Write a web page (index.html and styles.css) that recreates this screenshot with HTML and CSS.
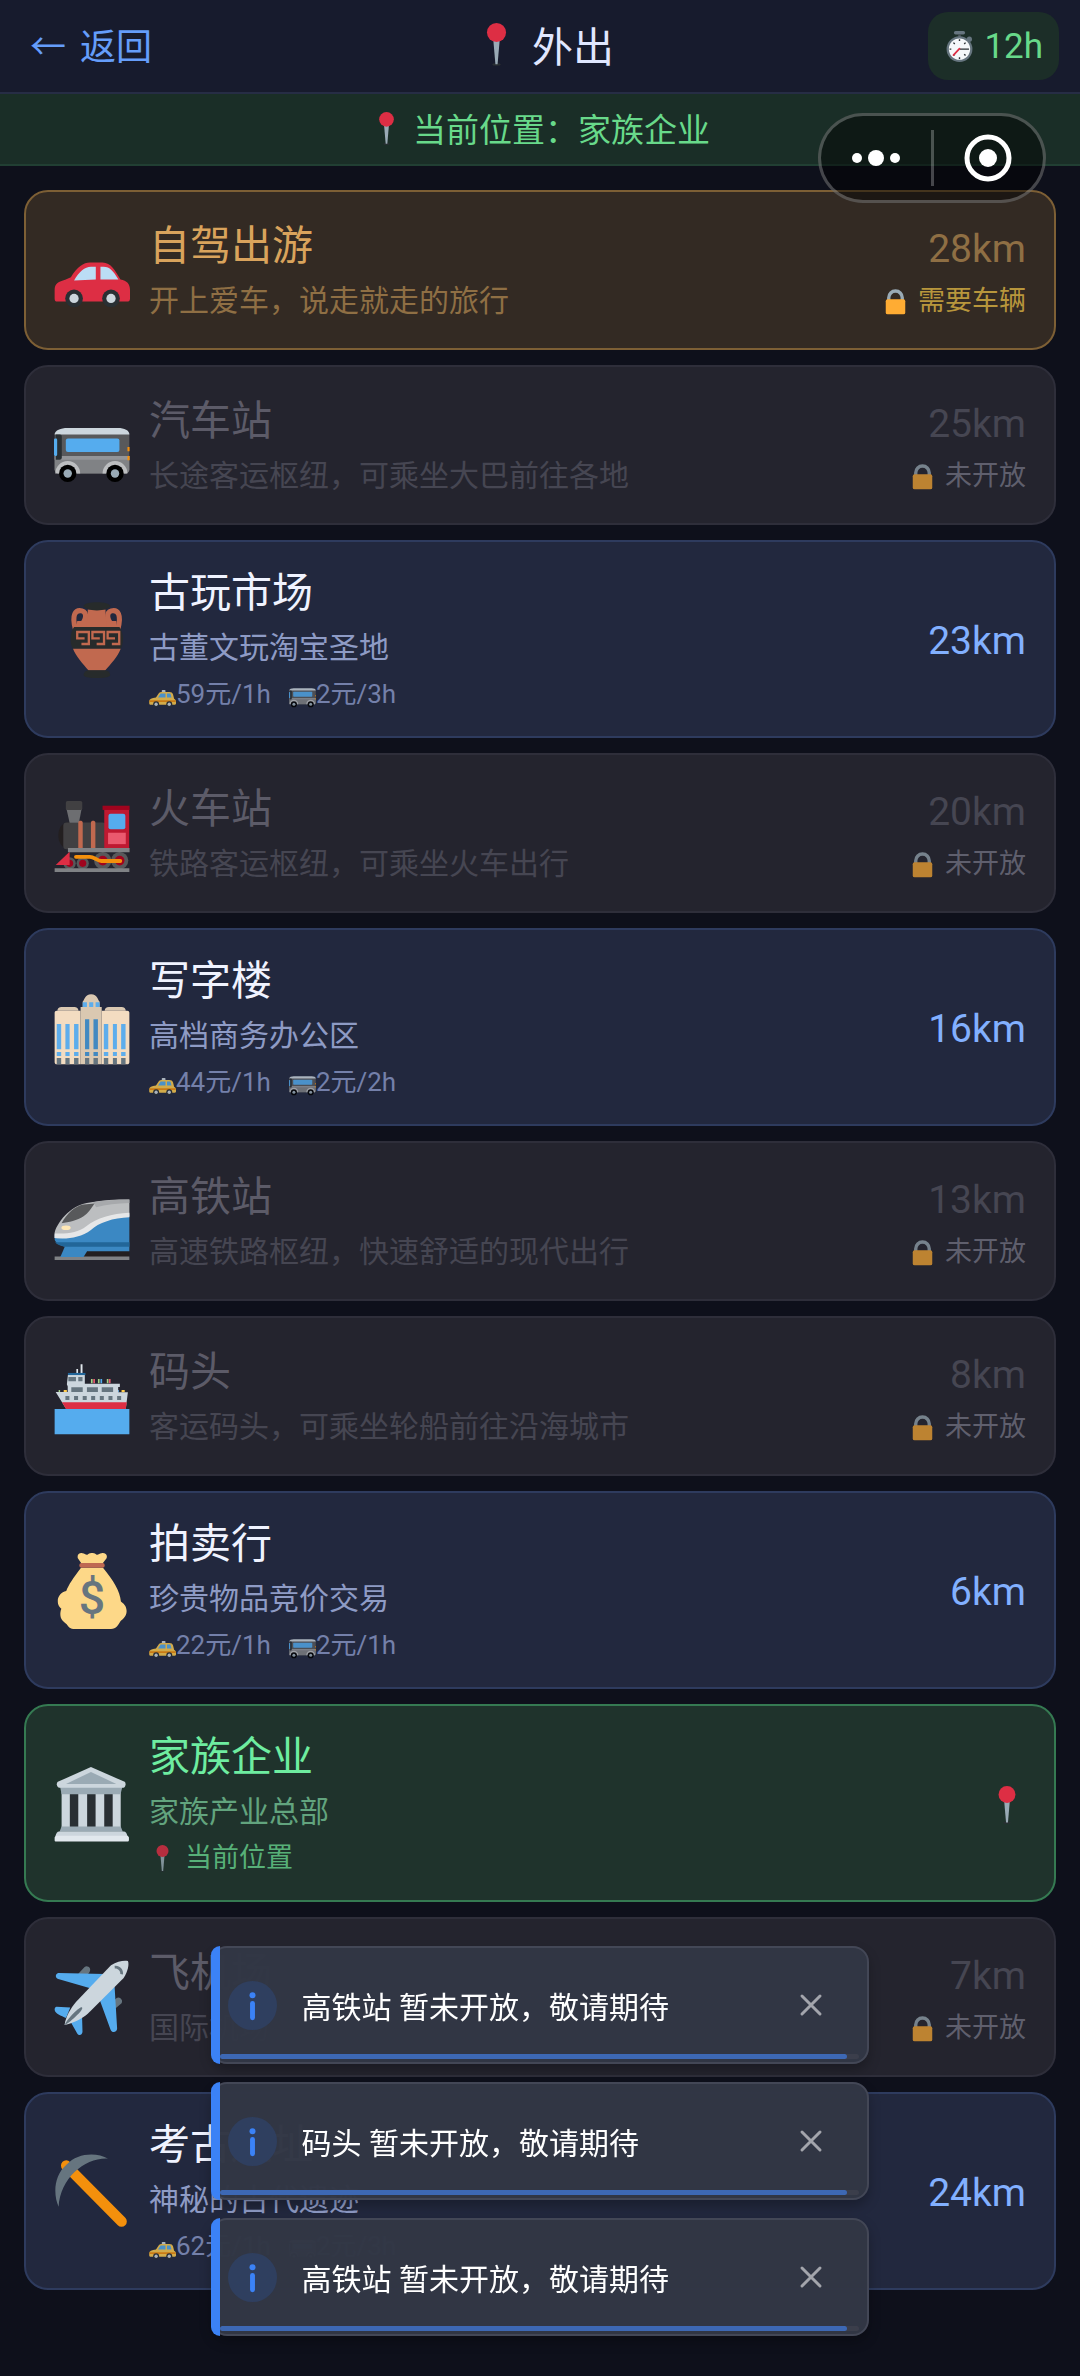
FILE: index.html
```html
<!DOCTYPE html>
<html lang="zh-CN">
  <head>
    <meta charset="UTF-8" />
    <meta name="viewport" content="width=device-width, initial-scale=1.0" />
    <title>外出</title>
    <link rel="stylesheet" href="styles.css">
  </head>
  <body>
    <!-- icon sprite -->
    <svg class="sprite" aria-hidden="true">
      <symbol id="i-pin" viewBox="0 0 36 36">
        <ellipse cx="18" cy="34.8" rx="3.500" ry="1" fill="#292f33" />
        <path d="M15.300 14h5.400l-1.800 20.500h-1.800z" fill="#99aab5" />
        <circle cx="18" cy="8" r="8" fill="#dd2e44" />
      </symbol>
      <symbol id="i-watch" viewBox="0 0 36 36">
        <rect x="11.500" y="0" width="13" height="4" rx="2" fill="#66757f" />
        <path d="M16.500 4h3v3h-3z" fill="#4b565d" />
        <circle cx="29.500" cy="9.500" r="3" fill="#66757f" />
        <circle cx="18" cy="21" r="15" fill="#66757f" />
        <circle cx="18" cy="21" r="12.400" fill="#f5f8fa" />
        <path d="M18 9.500v2M18 30.500v2M6.500 21h2M11 13.500l1.500 1.500M25 13.500l-1.500 1.500M11 28.500l1.500-1.500M25 28.500l-1.500-1.500M18 21h11" stroke="#292f33" stroke-width="1.600" />
        <path d="M18 20.500l-7 7.500" stroke="#dd2e44" stroke-width="2" stroke-linecap="round" />
      </symbol>
      <symbol id="i-lock" viewBox="0 0 36 36">
        <path d="M9 19v-6a9 9 0 0 1 18 0v6" fill="none" stroke="#99aab5" stroke-width="4.500" />
        <rect x="5" y="15" width="26" height="20" rx="2.500" fill="#ffac33" />
      </symbol>
      <symbol id="i-car" viewBox="0 0 36 36">
        <path d="M.3 31V27c0-3 2-4 5-4.800L8 21c3-5 6-7 9-7h6c4 0 6 4 8.500 8 3 .5 4.500 2 4.500 5v4c0 1-.5 1.500-1.500 1.500h-33C.7 32.500.3 32 .3 31z" fill="#dd2e44" />
        <path d="M9.500 22.500c2.500-4.200 5-6.500 8-6.500h2.300v6zM22 16h1.500c3 0 4.500 2 7 6H22z" fill="#bbddf5" />
        <circle cx="9.500" cy="31" r="4.200" fill="#292f33" /><circle cx="9.500" cy="31" r="2.200" fill="#ccd6dd" />
        <circle cx="27" cy="31" r="4.200" fill="#292f33" /><circle cx="27" cy="31" r="2.200" fill="#ccd6dd" />
      </symbol>
      <symbol id="i-taxi" viewBox="0 0 36 36">
        <rect x="17" y="12" width="5" height="3" rx="1" fill="#ccd6dd" />
        <path d="M.3 30v-3c0-3 3-4.500 9-5l4-6c.8-1 2-1.500 3.500-1.500H27c3 0 4 1 5 3l1.500 6C35 24 36 26 36 28v2c0 1-.5 1.500-1.500 1.500h-33C.7 31.500.3 31 .3 30z" fill="#ffcc4d" />
        <path d="M12 22l3.500-5.200H22V22zM24 16.800h4.500l1.500 5.200h-6z" fill="#55acee" />
        <path d="M1 25.500h34.500v2.500H.3z" fill="#f4900c" />
        <circle cx="9.500" cy="31" r="4" fill="#292f33" /><circle cx="9.500" cy="31" r="2.200" fill="#ccd6dd" />
        <circle cx="27" cy="31" r="4" fill="#292f33" /><circle cx="27" cy="31" r="2.200" fill="#ccd6dd" />
      </symbol>
      <symbol id="i-bus" viewBox="0 0 36 36">
        <path d="M.3 12h35.400v17c0 1.200-.8 2-2 2H2.300c-1.200 0-2-.8-2-2z" fill="#58595b" />
        <path d="M.3 22.700h35.400V29c0 1.200-.8 2-2 2H2.300c-1.200 0-2-.8-2-2z" fill="#808285" />
        <path d="M.3 22.700h35.400v1.800H.3z" fill="#939598" />
        <path d="M.3 12.600c0-2 3-3.100 6-3.100h24c3 0 5.400 1.100 5.400 3.100z" fill="#ccd6dd" />
        <path d="M.8 12.600h2c.6 0 .9.400.9 1v9.700c0 .8-.4 1.200-1 1.200H.8z" fill="#292f33" />
        <rect x="0" y="14.500" width="1.500" height="8.200" rx=".5" fill="#55acee" />
        <rect x="5.600" y="14.400" width="25.400" height="6.500" rx="1" fill="#55acee" />
        <path d="M34.800 18.500h1v2h-1zM34.800 22.700h1v2h-1z" fill="#f4900c" />
        <path d="M.6 31a5.900 5.900 0 0 1 11.800 0zM23 31a5.900 5.900 0 0 1 11.800 0z" fill="#bcbec0" />
        <circle cx="6.500" cy="31" r="4.100" /><circle cx="6.500" cy="31" r="2" fill="#99aab5" />
        <circle cx="28.900" cy="31" r="4.100" /><circle cx="28.900" cy="31" r="2" fill="#99aab5" />
      </symbol>
      <symbol id="i-vase" viewBox="0 0 36 36">
        <path d="M16 3.500h8.400v3l2.500 5.500H13.500L16 6.500z" fill="#c1694f" />
        <path d="M10.200 13c-2-7 0-9.500 3-8.800 2.600.8 2.600 4.800-2 8.300M30.200 13c2-7 0-9.500-3-8.800-2.600.8-2.600 4.800 2 8.300" fill="none" stroke="#c1694f" stroke-width="2.400" />
        <path d="M11 9h4.500v3.500h-5zM25 9h4.500l.5 3.500h-5z" fill="#c1694f" />
        <path d="M14 2c0-2.500 12.600-2.500 12.600 0 0 .8-3 2-6.300 2S14 2.800 14 2z" fill="#272b2b" />
        <path d="M9.500 11.800H31c2.200 3 2 8 .6 10.300H9C7.500 19.800 7.300 14.800 9.500 11.800z" fill="#272b2b" />
        <path d="M9 22.100h22.600c-1.500 4-4.600 7-7.400 10.400h-7.800C13.600 29 10.500 26 9 22.100z" fill="#c1694f" />
        <path d="M14.500 17.200H11V14.200h5.500v5.700H13M21.700 17.200h-3.500V14.200h5.500v5.700h-3.500M28.900 17.200h-3.500V14.200h5.500v5.700h-3.500" fill="none" stroke="#c1694f" stroke-width="1.100" />
        <path d="M16 32.300h8.600c1.500.5 2 1.500 2 2.300 0 2-12.600 2-12.600 0 0-.8.500-1.800 2-2.300z" fill="#272b2b" />
      </symbol>
      <symbol id="i-train" viewBox="0 0 36 36">
        <path d="M6 12.600h2v12.200H6c-5.200-1-5.200-11.200 0-12.200z" fill="#231f20" />
        <rect x="4.400" y="12.600" width="20" height="12.600" rx="1.500" fill="#414042" />
        <path d="M5.900 6h7.200l-1.300 6.700H7.400z" fill="#6d6e71" />
        <rect x="5.600" y="2.400" width="7.800" height="4.200" rx=".8" fill="#414042" />
        <path d="M11.500 12.500c0-1 2.100-1 2.100 0v12.300h-2.100zM17.500 12.500c0-1 2.100-1 2.100 0v12.300h-2.100z" fill="#c1694f" />
        <path d="M23.800 6h11.800v19H23.800z" fill="#be1931" />
        <path d="M23 4.600h12.800v2H23z" fill="#a0041e" />
        <rect x="25.800" y="8.400" width="8" height="7.400" rx="1" fill="#55acee" />
        <path d="M25.600 17.400h8.400v5.400h-8.400z" fill="#ea596e" />
        <circle cx="7.400" cy="31.900" r="2.900" fill="#58595b" /><circle cx="7.400" cy="31.900" r="1.700" fill="#a0041e" />
        <circle cx="13.600" cy="31.900" r="2.900" fill="#58595b" /><circle cx="13.600" cy="31.900" r="1.700" fill="#a0041e" />
        <circle cx="23.100" cy="30.600" r="4.100" fill="#58595b" /><circle cx="23.100" cy="30.600" r="2.300" fill="#a0041e" />
        <circle cx="31.100" cy="30.600" r="4.100" fill="#58595b" /><circle cx="31.100" cy="30.600" r="2.300" fill="#a0041e" />
        <path d="M6.600 24.600h29.200v2H6.600z" fill="#808285" />
        <path d="M.8 32.700l6.600-6.300v6.300z" fill="#dd2e44" />
        <path d="M10.400 28.800H17c2 0 3.500 2 5.500 2h8.900" fill="none" stroke="#f4900c" stroke-width="1.800" stroke-linecap="round" />
        <path d="M.3 34.200h35.400V36H.3z" fill="#808285" />
      </symbol>
      <symbol id="i-office" viewBox="0 0 36 36">
        <path d="M1.600 9.800c0-1.200.8-1.800 2-1.800h6c1.200 0 2 .6 2 1.800zM24 9.800c0-1.200.8-1.800 2-1.800h6c1.200 0 2 .6 2 1.800z" fill="#dac8b1" />
        <path d="M.3 10.800c0-.6.400-1 1-1h11.300v25.400H1.300c-.6 0-1-.4-1-1zM22.600 9.800h12.100c.6 0 1 .4 1 1v23.400c0 .6-.4 1-1 1H22.600z" fill="#f3dcc1" />
        <path d="M12.600 8h1V5.500c.8-.5 1-3.500 4-3.500s3.200 3 4 3.500V8h1v27.200h-10z" fill="#dac8b1" />
        <path d="M13.600 5.800h2V8h-2zM16.700 5.800h1.900V8h-1.900zM19.700 5.800h1.900V8h-1.900zM1.300 16.100h2.100v12H1.300zM5.400 16.100h2v12h-2zM9.500 16.100h2.100v12H9.500zM23.600 16.100h2.100v12h-2.100zM27.900 16.100h1.900v12h-1.900zM31.800 16.100h2.100v12h-2.100zM1.300 29.400h2.100v1.900H1.300zM5.400 29.400h2v1.900h-2zM9.500 29.400h2.100v1.900H9.500zM23.600 29.400h2.100v1.900h-2.100zM27.900 29.400h1.900v1.900h-1.900zM31.800 29.400h2.100v1.900h-2.100z" fill="#5dadec" />
        <path d="M14.700 13.900h2v14.200h-2zM18.700 13.900h2.100v14.200h-2.100zM14.700 29.400h2v1.900h-2zM18.700 29.400h2.100v1.900h-2.100z" fill="#4289c1" />
        <path d="M1.300 32.200h2.100v3H1.300zM5.400 32.200h2v3h-2zM9.500 32.200h2.100v3H9.500zM14.700 32.200h2v3h-2zM18.700 32.200h2.100v3h-2.100zM23.600 32.200h2.100v3h-2.100zM27.900 32.200h1.900v3h-1.900zM31.800 32.200h2.100v3h-2.100z" fill="#66757f" />
      </symbol>
      <symbol id="i-bullet" viewBox="0 0 36 36">
        <path d="M14 31h21.700v4H14z" fill="#231f20" />
        <path d="M.3 34.400h35.400V36H.3z" fill="#808285" />
        <path d="M5.400 29h12l-3.400 5.600H3z" fill="#3b88c3" />
        <path d="M.3 24c4 1 10 .5 15-3s12-6.500 20.400-6.500v17.300H16L5.400 29.700C2.500 29 .3 27.500.3 26z" fill="#3b88c3" />
        <path d="M.5 27.600h35.200v2.100H5.400C3 29.300 1.200 28.600.5 27.600z" fill="#226699" />
        <path d="M35.700 7.400v8C28 15.800 21 17.500 17 21c-5 4-11 5-16.700 4.600V23C2 17 9 9.500 17 8.800c6-1.200 12-1.400 18.700-1.400z" fill="#bcbec0" />
        <path d="M35.700 13.600v2.200C28 16 21 18.500 17.500 21.800 12.500 25.500 6 26.300.3 25.600v-2.200c6 .3 11-.4 15-3.400 5-4 12-6 20.400-6.400z" fill="#e6e7e8" />
        <path d="M35.700 7.400V9c-6 .2-11 .8-15.700 2l-1.500-2.300c5-.9 11-1.300 17.200-1.300z" fill="#a7a9ac" />
        <path d="M3.600 18.600C6 14 10 10.400 14 9.700l5.200-.5c-1.700 2.500-3 4.700-5.200 6.100-3 2-7 2.800-10.400 3.300z" fill="#58595b" />
        <ellipse cx="5.700" cy="20.700" rx="2.200" ry="1.100" fill="#ffe8b6" />
      </symbol>
      <symbol id="i-ship" viewBox="0 0 36 36">
        <path d="M17.500 9.500h.8v2h-.8zM20.800 9.500h.8v2h-.8zM25 9.500h.8v2H25zM2.200 14.700h.7v1h-.7z" fill="#a6d388" />
        <path d="M18.600 9.500h.8v2h-.8zM26 9.500h.8v2H26z" fill="#ea596e" />
        <path d="M22 9.500h.8v2H22zM30 14.700h.7v1H30z" fill="#55acee" />
        <path d="M4.600 14.700h1.500v1H4.600zM32 14.700h1.500v1H32z" fill="#ffcc4d" />
        <path d="M12.600 2.500h.9v5h-.9zM10.600 4.700h.8v2.500h-.8z" fill="#e1e8ed" />
        <path d="M6.600 7.500h8v4.200h16.600v1.600h-.8v2.400H35l-1 7.900H5.700L.8 15.600h5.700V13l-.4-1z" fill="#ccd6dd" />
        <path d="M6.600 6.600h8.300v1H6.600z" fill="#226699" />
        <path d="M6.800 8.500h3.600v2H6.800zM11.500 8.500h2v2h-2zM8.200 13.400h5.400v2.200H8.200zM15.600 13.400h5.200v2.200h-5.200zM22.600 13.400H28v2.200h-5.400zM5.400 17.500h1.900v1.900H5.400zM9.500 17.500h1.900v1.900H9.500zM13.600 17.500h1.900v1.900h-1.900zM17.600 17.500h1.900v1.900h-1.900zM21.700 17.500h1.900v1.900h-1.900zM25.800 17.500h1.900v1.900h-1.900zM29.900 17.500h1.900v1.900h-1.900z" fill="#66757f" />
        <path d="M3.800 20.500h30.700l-.5 3.200H5.700z" fill="#dd2e44" />
        <path d="M.3 23.700h35.400v12H.3z" fill="#55acee" />
      </symbol>
      <symbol id="i-bank" viewBox="0 0 36 36">
        <path d="M3.600 12.300h28v17h-28z" fill="#ccd6dd" />
        <path d="M7.500 12.300h4v17h-4zM15.700 12.300h4v17h-4zM23.800 12.300h4v17h-4z" fill="#292f33" />
        <path d="M2.800 9.500h29.700L31.500 13.400H3.600zM3.600 28.700h28l1 2.500H2.600z" fill="#9aaab4" />
        <path d="M17.500.5l16 7c.6.500.6 2.300-.5 2.800H2.300c-1.200-.4-1.200-2.300-.5-2.800z" fill="#ccd6dd" />
        <path d="M17.500 2.800l12 5.700H5.700z" fill="#9aaab4" />
        <path d="M2.500 31h30.500c1 0 1.500 1 1.800 2.200H.7C1 32 1.500 31 2.500 31z" fill="#ccd6dd" />
        <path d="M.3 34c0-.7.500-1 1-1h33c.6 0 1.200.3 1.200 1v1c0 .5-.3.800-.8.800H1c-.5 0-.7-.3-.7-.8z" fill="#e1e8ed" />
      </symbol>
      <symbol id="i-plane" viewBox="0 0 36 36">
        <path d="M11.500 6.500l3-3.200c1.500-1 3.500.8 2.300 2.500L15 8zM28.500 23.500l3.500-3c1-1.500-1-3.500-2.300-2.500L28 19.500z" fill="#66757f" />
        <path d="M2 6.200l22 .4-6 7L2 9c-1.500-.6-1.500-2.300 0-2.800zM28.700 12.500l1.200 20c0 1.700-2.400 2.300-3.100.5L21.500 18.500zM1.200 22.200l6.500.3-2 5C3.500 26.500.3 25.500.3 23.500c0-.7.3-1.200.9-1.300zM13.300 27l.2 7c-.2 1.800-1.700 2-2.500.8L8 29.500z" fill="#55acee" />
        <path d="M27 2.500C30 .5 33.500 0 35 .5c.7 1.500 0 5-2 8L16 25.500c-3 2.500-7 4.500-11 5.300.5-4 3-8 5.500-11z" fill="#ccd6dd" />
        <path d="M13.300 22.500c.4.500-.5 2-3.300 4.500-2 1.900-4 3.500-5 3.800.5-1.300 2-3.300 4-5.300 2.500-2.500 3.900-3.500 4.300-3zM28.700 2.700c2.300-.3 4.300 1.500 4 4.200l-1.300-.3c.2-1.400-1.100-2.700-2.600-2.600z" fill="#66757f" />
      </symbol>
      <symbol id="i-pick" viewBox="0 0 36 36">
        <path d="M5.800 5.500L32 32" stroke="#f4900c" stroke-width="5" stroke-linecap="round" />
        <path d="M25.700 2.200C15 1.500 3 11 2.200 25 -.5 19 0 10 6 5 11-.5 20-1 25.700 2.200z" fill="#66757f" />
      </symbol>
      <symbol id="i-info" viewBox="0 0 36 36">
        <circle cx="18" cy="10.500" r="2.200" fill="#3b82f6" />
        <path d="M18 16.500v10.500" stroke="#3b82f6" stroke-width="3.600" stroke-linecap="round" />
      </symbol>
      <symbol id="i-close" viewBox="0 0 24 24">
        <path d="M3 3l18 18M21 3L3 21" stroke="currentColor" stroke-width="3" stroke-linecap="round" />
      </symbol>
    </svg>

    <header class="header">
      <button class="back"><span>←</span><span>返回</span></button>
      <h1 class="title"><svg class="icon-title"><use href="#i-pin" /></svg>外出</h1>
      <div class="clock"><svg class="icon-clock"><use href="#i-watch" /></svg>12h</div>
    </header>

    <div class="location"><svg class="icon-location"><use href="#i-pin" /></svg>当前位置：家族企业</div>

    <main class="places">
      <button class="place need-car">
        <svg class="place-icon"><use href="#i-car" /></svg>
        <span class="info">
          <span class="name">自驾出游</span>
          <span class="desc">开上爱车，说走就走的旅行</span>
        </span>
        <span class="side">
          <span class="distance">28km</span>
          <span class="tag"><svg class="icon-small"><use href="#i-lock" /></svg>需要车辆</span>
        </span>
      </button>

      <button class="place locked">
        <svg class="place-icon"><use href="#i-bus" /></svg>
        <span class="info">
          <span class="name">汽车站</span>
          <span class="desc">长途客运枢纽，可乘坐大巴前往各地</span>
        </span>
        <span class="side">
          <span class="distance">25km</span>
          <span class="tag"><svg class="icon-small"><use href="#i-lock" /></svg>未开放</span>
        </span>
      </button>

      <button class="place">
        <svg class="place-icon"><use href="#i-vase" /></svg>
        <span class="info">
          <span class="name">古玩市场</span>
          <span class="desc">古董文玩淘宝圣地</span>
          <span class="costs">
            <span class="cost"><svg class="icon-small"><use href="#i-taxi" /></svg>59元/1h</span>
            <span class="cost"><svg class="icon-small"><use href="#i-bus" /></svg>2元/3h</span>
          </span>
        </span>
        <span class="side"><span class="distance">23km</span></span>
      </button>

      <button class="place locked">
        <svg class="place-icon"><use href="#i-train" /></svg>
        <span class="info">
          <span class="name">火车站</span>
          <span class="desc">铁路客运枢纽，可乘坐火车出行</span>
        </span>
        <span class="side">
          <span class="distance">20km</span>
          <span class="tag"><svg class="icon-small"><use href="#i-lock" /></svg>未开放</span>
        </span>
      </button>

      <button class="place">
        <svg class="place-icon"><use href="#i-office" /></svg>
        <span class="info">
          <span class="name">写字楼</span>
          <span class="desc">高档商务办公区</span>
          <span class="costs">
            <span class="cost"><svg class="icon-small"><use href="#i-taxi" /></svg>44元/1h</span>
            <span class="cost"><svg class="icon-small"><use href="#i-bus" /></svg>2元/2h</span>
          </span>
        </span>
        <span class="side"><span class="distance">16km</span></span>
      </button>

      <button class="place locked">
        <svg class="place-icon"><use href="#i-bullet" /></svg>
        <span class="info">
          <span class="name">高铁站</span>
          <span class="desc">高速铁路枢纽，快速舒适的现代出行</span>
        </span>
        <span class="side">
          <span class="distance">13km</span>
          <span class="tag"><svg class="icon-small"><use href="#i-lock" /></svg>未开放</span>
        </span>
      </button>

      <button class="place locked">
        <svg class="place-icon"><use href="#i-ship" /></svg>
        <span class="info">
          <span class="name">码头</span>
          <span class="desc">客运码头，可乘坐轮船前往沿海城市</span>
        </span>
        <span class="side">
          <span class="distance">8km</span>
          <span class="tag"><svg class="icon-small"><use href="#i-lock" /></svg>未开放</span>
        </span>
      </button>

      <button class="place">
        <svg class="place-icon" viewBox="0 0 36 36">
          <path d="M12.800 7h10.400c5 6 8 11 8.500 16 1 .8 2.700 2 2.700 4.500 0 2.800-2 3.800-3 5C30.500 34 29.500 36 27 36H10c-2.500 0-3-1-4-2.300C4.500 32.500 3 31.500 3 29c0-1 .2-2 .5-2.600C2 25 1.800 24 1.800 22.500c0-2 1.700-4 4-4.500C7 15 9 12 12.800 7z" fill="#fdd888" />
          <path d="M13 5L11.300 2.500C10.800.8 12-.2 13.500.1c1 .1 1.500.9 2.300.7C17-.3 19-.3 20.200.8c.8.2 1.300-.6 2.300-.7 1.700-.3 3 .7 2.400 2.400L23 5z" fill="#fdd888" />
          <rect x="12" y="4.700" width="12" height="2.300" rx="1" fill="#bf6952" />
          <text class="bag-sign" x="18" y="29" text-anchor="middle">$</text>
        </svg>
        <span class="info">
          <span class="name">拍卖行</span>
          <span class="desc">珍贵物品竞价交易</span>
          <span class="costs">
            <span class="cost"><svg class="icon-small"><use href="#i-taxi" /></svg>22元/1h</span>
            <span class="cost"><svg class="icon-small"><use href="#i-bus" /></svg>2元/1h</span>
          </span>
        </span>
        <span class="side"><span class="distance">6km</span></span>
      </button>

      <button class="place current">
        <svg class="place-icon"><use href="#i-bank" /></svg>
        <span class="info">
          <span class="name">家族企业</span>
          <span class="desc">家族产业总部</span>
          <span class="here"><svg class="icon-small"><use href="#i-pin" /></svg>当前位置</span>
        </span>
        <span class="side"><svg class="icon-here"><use href="#i-pin" /></svg></span>
      </button>

      <button class="place locked">
        <svg class="place-icon"><use href="#i-plane" /></svg>
        <span class="info">
          <span class="name">飞机场</span>
          <span class="desc">国际机场</span>
        </span>
        <span class="side">
          <span class="distance">7km</span>
          <span class="tag"><svg class="icon-small"><use href="#i-lock" /></svg>未开放</span>
        </span>
      </button>

      <button class="place">
        <svg class="place-icon"><use href="#i-pick" /></svg>
        <span class="info">
          <span class="name">考古遗址</span>
          <span class="desc">神秘的古代遗迹</span>
          <span class="costs">
            <span class="cost"><svg class="icon-small"><use href="#i-taxi" /></svg>62元/1h</span>
            <span class="cost"><svg class="icon-small"><use href="#i-bus" /></svg>2元/3h</span>
          </span>
        </span>
        <span class="side"><span class="distance">24km</span></span>
      </button>
    </main>

    <!-- mini program menu -->
    <div class="capsule">
      <button class="capsule-btn" aria-label="更多">
        <svg class="icon-more" viewBox="0 0 48 18"><circle cx="5" cy="9" r="5" /><circle cx="24" cy="9" r="8" /><circle cx="43" cy="9" r="5" /></svg>
      </button>
      <button class="capsule-btn" aria-label="关闭">
        <svg class="icon-target" viewBox="0 0 48 48"><circle cx="24" cy="24" r="21" fill="none" stroke="#fff" stroke-width="5" /><circle cx="24" cy="24" r="9" /></svg>
      </button>
    </div>

    <div class="toasts">
      <div class="toast">
        <svg class="toast-icon"><use href="#i-info" /></svg>
        <span class="toast-text">高铁站 暂未开放，敬请期待</span>
        <button class="toast-close" aria-label="关闭"><svg class="icon-close"><use href="#i-close" /></svg></button>
        <div class="progress"><div class="progress-bar"></div></div>
      </div>
      <div class="toast">
        <svg class="toast-icon"><use href="#i-info" /></svg>
        <span class="toast-text">码头 暂未开放，敬请期待</span>
        <button class="toast-close" aria-label="关闭"><svg class="icon-close"><use href="#i-close" /></svg></button>
        <div class="progress"><div class="progress-bar"></div></div>
      </div>
      <div class="toast">
        <svg class="toast-icon"><use href="#i-info" /></svg>
        <span class="toast-text">高铁站 暂未开放，敬请期待</span>
        <button class="toast-close" aria-label="关闭"><svg class="icon-close"><use href="#i-close" /></svg></button>
        <div class="progress"><div class="progress-bar"></div></div>
      </div>
    </div>
  </body>
</html>
```
FILE: styles.css
```css
* {
  box-sizing: border-box;
}
body {
  margin: 0;
  min-height: 100vh;
  font-family: Roboto, "Noto Sans CJK SC", sans-serif;
  color: #f0f3ff;
  background-color: #0e101b;
}
button {
  font: inherit;
  color: inherit;
  background: none;
  border: none;
  padding: 0;
  cursor: pointer;
}
svg {
  display: block;
  flex: none;
}
.sprite {
  position: absolute;
  width: 0;
  height: 0;
}

/* header */
.header {
  display: grid;
  grid-template-columns: 1fr auto 1fr;
  align-items: center;
  height: 94px;
  padding: 0 21px 0 30px;
  background-color: #171b2d;
  border-bottom: 2px solid #262d45;
}
.back {
  justify-self: start;
  display: flex;
  gap: 14px;
  padding-bottom: 4px;
  font-size: 36px;
  color: #659dfa;
}
.title {
  display: flex;
  align-items: center;
  gap: 14px;
  margin: 0;
  padding-bottom: 4px;
  font-size: 41px;
  font-weight: 400;
  color: #e0e7ff;
}
.icon-title {
  width: 43px;
  height: 43px;
}
.clock {
  justify-self: end;
  display: flex;
  align-items: center;
  gap: 9px;
  height: 68px;
  padding: 0 16px;
  border-radius: 20px;
  font-size: 35px;
  color: #68d98a;
  background-color: #1c2e28;
}
.icon-clock {
  width: 31px;
  height: 31px;
}

.location {
  display: flex;
  justify-content: center;
  align-items: center;
  gap: 10px;
  height: 72px;
  padding-bottom: 2px;
  font-size: 33px;
  color: #68d98a;
  background-color: #1a2e27;
  border-bottom: 2px solid #213f33;
}
.icon-location {
  width: 33px;
  height: 33px;
}

/* places */
.places {
  display: flex;
  flex-direction: column;
  gap: 15px;
  padding: 24px 24px 84px;
}
.place {
  display: flex;
  align-items: center;
  width: 100%;
  min-height: 160px;
  padding: 24px 28px;
  text-align: left;
  border: 2px solid #2e3b5e;
  border-radius: 24px;
  background-color: #22283e;
}
.place-icon {
  width: 76px;
  height: 76px;
  margin: 2px 19px 0 0;
}
.info {
  flex: 1;
  display: flex;
  flex-direction: column;
  gap: 8px;
}
.name {
  font-size: 41px;
  line-height: 54px;
}
.desc {
  font-size: 30px;
  line-height: 40px;
  color: #8e9bc5;
}
.costs {
  display: flex;
  gap: 18px;
  font-size: 26px;
  line-height: 36px;
  color: #7480aa;
}
.cost {
  display: flex;
  align-items: center;
}
.cost .icon-small {
  opacity: 0.8;
}
.icon-small {
  width: 27px;
  height: 27px;
}
.here,
.tag {
  display: flex;
  align-items: center;
  gap: 9px;
  font-size: 27px;
  line-height: 36px;
}
.side {
  display: flex;
  flex-direction: column;
  align-items: flex-end;
  gap: 10px;
  padding-top: 4px;
}
.distance {
  font-size: 39px;
  line-height: 48px;
  color: #82b0ff;
}
.icon-here {
  width: 38px;
  height: 38px;
}
.bag-sign {
  font-family: Roboto, sans-serif;
  font-size: 22px;
  font-weight: 500;
  fill: #67757f;
}

.need-car {
  background-color: #332a23;
  border-color: #7d5f35;
}
.need-car .name {
  color: #d9a35c;
}
.need-car .desc,
.need-car .distance {
  color: #8f6f44;
}
.need-car .tag {
  color: #b8963c;
}

.locked {
  background-color: #24242e;
  border-color: #2e2e3a;
}
.locked .name {
  color: #5c5b68;
}
.locked .desc,
.locked .distance {
  color: #464652;
}
.locked .tag {
  color: #5f5f6d;
}
.locked .icon-small {
  opacity: 0.7;
}

.current {
  background-color: #1f332c;
  border-color: #357a52;
}
.current .name {
  color: #6eeda0;
}
.current .desc {
  color: #62a47e;
}
.here {
  color: #57b078;
}
.here .icon-small {
  opacity: 0.8;
}

/* floating menu */
.capsule {
  position: fixed;
  top: 113px;
  right: 34px;
  display: flex;
  width: 228px;
  height: 90px;
  padding: 14px 0;
  border: 3px solid rgba(255, 255, 255, 0.25);
  border-radius: 45px;
  background-color: rgba(0, 0, 0, 0.45);
}
.capsule-btn {
  flex: 1;
  display: flex;
  justify-content: center;
  align-items: center;
}
.capsule-btn + .capsule-btn {
  border-left: 3px solid rgba(255, 255, 255, 0.25);
}
.capsule svg {
  fill: #fff;
}
.icon-more {
  width: 48px;
  height: 18px;
}
.icon-target {
  width: 48px;
  height: 48px;
}

/* toasts */
.toasts {
  position: fixed;
  left: 0;
  right: 0;
  bottom: 40px;
  display: flex;
  flex-direction: column;
  align-items: center;
  gap: 18px;
}
.toast {
  position: relative;
  display: flex;
  align-items: center;
  width: 61%;
  height: 118px;
  padding: 0 34px 0 15px;
  border: 2px solid #434756;
  border-radius: 16px;
  background-color: rgba(50, 55, 69, 0.99);
  box-shadow: 0 6px 12px rgba(0, 0, 0, 0.25);
}
.toast::before {
  content: "";
  position: absolute;
  top: -2px;
  bottom: -2px;
  left: -2px;
  width: 9px;
  border-radius: 9px 0 0 9px;
  background-color: #3b82f6;
}
.toast-icon {
  width: 49px;
  height: 49px;
  margin-right: 25px;
  border-radius: 50%;
  background-color: #2f3f5f;
}
.toast-text {
  flex: 1;
  font-size: 30px;
  color: #fff;
}
.toast-close {
  padding: 10px;
  color: #a3a5ac;
}
.icon-close {
  width: 24px;
  height: 24px;
}
.progress {
  position: absolute;
  left: 7px;
  right: 8px;
  bottom: 3px;
  height: 5px;
  border-radius: 3px;
  background-color: #3b3e4b;
}
.progress-bar {
  width: 98%;
  height: 100%;
  border-radius: 3px;
  background-color: #3d68b4;
}
```
